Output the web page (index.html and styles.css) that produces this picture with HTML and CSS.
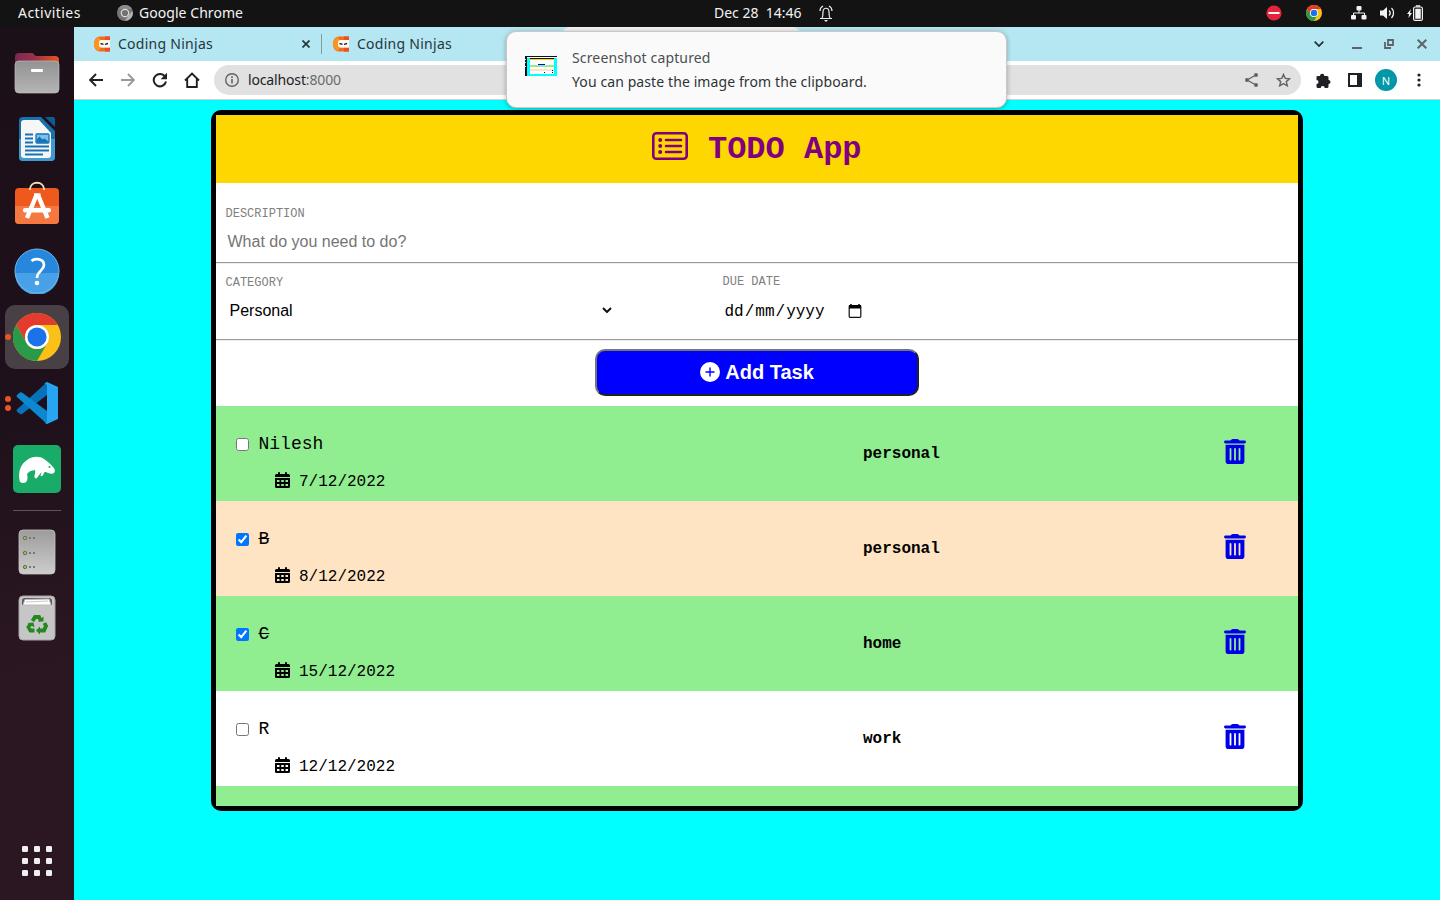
FILE: index.html
```html
<!DOCTYPE html>
<html lang="en">
<head>
<meta charset="utf-8">
<title>TODO App</title>
<link rel="stylesheet" href="styles.css">
</head>
<body>
<svg class="defs" width="0" height="0" aria-hidden="true">
  <symbol id="ninja" viewBox="0 0 16 16">
    <path d="M16 .5H6C2.500.500 0 3.500 0 8s2.500 7.500 6 7.500h10v-4H8a3 3 0 0 1-2-1v-6h10z" fill="#f36b1c"/>
    <path d="M5 1C1.500 2.500 0 5 0 8s1.500 5.500 5 7l2-4-2-3 2-3z" fill="#fb951f"/>
    <path d="M11 .500h5v4h-5zM11 11.500h5v4h-5z" fill="#f04f25"/>
    <rect x="5" y="4" width="11" height="7.500" rx="2.500" fill="#fffaf0"/><path d="M13 4h3v7.500h-3z" fill="#fffaf0"/>
    <path d="M6.500 7.500l3 .8M14 7.500l-3 .8" stroke="#222" stroke-width="1.300"/>
  </symbol>
  <symbol id="chrome" viewBox="0 0 48 48">
    <circle cx="24" cy="24" r="24" fill="#fbc116"/>
    <path d="M3.200 12A24 24 0 0 1 44.800 12H24a12 12 0 0 0-10.400 18z" fill="#e33b2e"/>
    <path d="M3.200 12A24 24 0 0 0 24 48l10.400-18a12 12 0 0 1-20.800 0z" fill="#2a9a48"/>
    <circle cx="24" cy="24" r="12" fill="#fff"/><circle cx="24" cy="24" r="9.600" fill="#1a73e8"/>
  </symbol>
  <symbol id="calendar" viewBox="0 0 15 16">
    <path d="M3 1a1 1 0 0 1 2 0v1h5V1a1 1 0 0 1 2 0v1h1.500A1.500 1.500 0 0 1 15 3.500V5H0V3.500A1.500 1.500 0 0 1 1.500 2H3z"/>
    <path fill-rule="evenodd" d="M0 6h15v8.500a1.500 1.500 0 0 1-1.500 1.500h-12A1.500 1.500 0 0 1 0 14.500zM2 8v2h2.500V8zm4.200 0v2h2.600V8zM10.500 8v2H13V8zM2 12v2h2.500v-2zm4.200 0v2h2.600v-2zm4.300 0v2H13v-2z"/>
  </symbol>
  <symbol id="trash" viewBox="0 0 22 25">
    <path d="M6.500 1.600L7.500.500Q8 0 8.700 0h4.600q.7 0 1.200.5l1 1.100h5a1.450 1.450 0 0 1 0 2.900h-19a1.450 1.450 0 0 1 0-2.900z"/>
    <path fill-rule="evenodd" d="M1.600 5.800h18.800v16.400a2.800 2.800 0 0 1-2.800 2.800H4.400a2.800 2.800 0 0 1-2.800-2.800zM5.600 9.500v11.600q.9 1 1.800 0V9.500q-.9-1-1.800 0zM10.100 9.500v11.600q.9 1 1.800 0V9.500q-.9-1-1.800 0zM14.600 9.500v11.600q.9 1 1.800 0V9.500q-.9-1-1.800 0z"/>
  </symbol>
</svg>

<div class="desktop">
  <header class="topbar">
    <div class="top-left">
      <span class="activities">Activities</span>
      <svg class="gray-chrome" width="16" height="16" viewBox="0 0 16 16"><circle cx="8" cy="8" r="8" fill="#777"/><path d="M1 4a8 8 0 0 1 14 0H8z" fill="#8a8a8a"/><path d="M8 16l4-6 3.500-4A8 8 0 0 1 8 16z" fill="#b5b5b5"/><circle cx="8" cy="8" r="4.300" fill="#ddd"/><circle cx="8" cy="8" r="3.100" fill="#727272"/></svg>
      <span class="app-name">Google Chrome</span>
    </div>
    <div class="top-clock">
      <span class="clock">Dec 28&nbsp; 14:46</span>
      <svg width="14" height="17" viewBox="0 0 14 17" fill="none" stroke="#f0f0f0" stroke-width="1.200"><path d="M1 13.500h12M3 13c1-1.500 1-3.500 1-6 0-5 6-5 6 0 0 2.500 0 4.500 1 6M4 1C2 2 1 3.500 1 6M10 1c2 1 3 2.500 3 5"/><path d="M5 15h4l-2 2z" fill="#f0f0f0" stroke="none"/></svg>
    </div>
    <div class="tray">
      <svg class="t-dnd" width="16" height="16" viewBox="0 0 16 16"><circle cx="8" cy="8" r="7.600" fill="#e4243b"/><path d="M2.500 8h11" stroke="#fff" stroke-width="2"/></svg>
      <svg class="t-chrome" width="16" height="16"><use href="#chrome"/></svg>
      <svg class="t-net" width="16" height="14" viewBox="0 0 16 14" fill="#f2f2f2"><rect x="5.500" width="5" height="4.500" rx="1"/><rect y="9" width="5" height="4.500" rx="1"/><rect x="10.500" y="9" width="5" height="4.500" rx="1"/><path d="M8 4v3M2.500 9V7h11v2" fill="none" stroke="#f2f2f2"/></svg>
      <svg class="t-vol" width="15" height="14" viewBox="0 0 15 14"><path d="M0 4.500h3L7 1v12L3 9.500H0z" fill="#f2f2f2"/><path d="M9 4.500c1.400 1.400 1.400 3.600 0 5M11.500 2c2.700 2.700 2.700 7.300 0 10" fill="none" stroke="#f2f2f2" stroke-width="1.300"/></svg>
      <svg class="t-bat" width="16" height="16" viewBox="0 0 16 16"><path d="M4 4L0 9h2l-.5 4L5 8H3z" fill="#f2f2f2"/><rect x="6.600" y="2" width="8.800" height="13.400" rx="1.500" fill="none" stroke="#f2f2f2" stroke-width="1.200"/><path d="M9 .500h4v1H9zM8.500 4h5v9.500h-5z" fill="#f2f2f2" stroke="#f2f2f2" stroke-width=".5"/></svg>
    </div>
  </header>

  <div class="workspace">
    <nav class="dock">
      <div class="dock-item"><svg width="46" height="42" viewBox="0 0 46 42"><defs><linearGradient id="fg"><stop offset="0" stop-color="#7a2856"/><stop offset=".45" stop-color="#9d3148"/><stop offset="1" stop-color="#e95420"/></linearGradient><linearGradient id="gg" x2="0" y2="1"><stop offset="0" stop-color="#929292"/><stop offset="1" stop-color="#b5b5b5"/></linearGradient><linearGradient id="dg" x2="0" y2="1"><stop offset="0" stop-color="#9c9c9c"/><stop offset="1" stop-color="#cdcdcd"/></linearGradient></defs><path d="M1 5a4 4 0 0 1 4-4h13q1.500 0 2.500 2 .5 1 2 1H41a4 4 0 0 1 4 4v12H1z" fill="url(#fg)"/><rect x="1" y="9" width="44" height="32" rx="4" fill="url(#gg)" stroke="#bdbdbd" stroke-width=".7"/><rect x="17" y="17" width="12" height="3" rx="1" fill="#fff"/></svg></div>
      <div class="dock-item"><svg width="38" height="46" viewBox="0 0 38 46"><path d="M5 1h18l14 14v26a4 4 0 0 1-4 4H5a4 4 0 0 1-4-4V5a4 4 0 0 1 4-4z" fill="#1a6fae"/><path d="M1 23h36v18a4 4 0 0 1-4 4H5a4 4 0 0 1-4-4z" fill="#3f9ad0"/><path d="M27 1h8a2 2 0 0 1 2 2v8z" fill="#0c5d96"/><path d="M6 4h15l12 13v22a3 3 0 0 1-3 3H6a3 3 0 0 1-3-3V7a3 3 0 0 1 3-3z" fill="#f6f6f6"/><path d="M7 18.500h8M7 22.500h8M7 26.500h8M7 30.500h24M7 34.500h24M7 38.500h18" stroke="#1673b4" stroke-width="2"/><rect x="18" y="18" width="13" height="9" rx="1" fill="#7cc0ee" stroke="#1673b4" stroke-width="1.300"/><path d="M18.500 26.500v-3l3-3 3 3 2-1 4 3v1z" fill="#1673b4"/></svg></div>
      <div class="dock-item"><svg class="store" width="46" height="44" viewBox="0 0 46 44"><path d="M16 8.500c0-9 14-9 14 0" fill="none" stroke="#f5dcae" stroke-width="2"/><rect x="1" y="7" width="44" height="36" rx="4" fill="#ee5a1e"/><path d="M1 25h44v14a4 4 0 0 1-4 4H5a4 4 0 0 1-4-4z" fill="#f4783f"/><path d="M16 9V7m14 2V7" stroke="#f5dcae" stroke-width="2"/><path d="M22.500 14L13 37M24 14l9.500 23" stroke="#fff" stroke-width="4.500"/><path d="M20 13.500h6.500" stroke="#fff" stroke-width="2.500"/><rect x="9" y="27" width="28" height="4.500" rx="2" fill="#fff"/></svg></div>
      <div class="dock-item"><svg width="46" height="46" viewBox="0 0 46 46"><circle cx="23" cy="23" r="22" fill="#2687dc"/><path d="M1 25a22 22 0 0 0 44 0z" fill="#48a0e6"/><circle cx="23" cy="23" r="22" fill="none" stroke="#6bb8ec"/><path d="M17.500 13c3-3 12.500-2.800 12.500 4 0 5.500-7 6-7 13" fill="none" stroke="#fff" stroke-width="2.700"/><circle cx="23" cy="35" r="2.300" fill="#fff"/></svg></div>
      <div class="dock-item active"><i class="dots"><b></b></i><svg width="48" height="48"><use href="#chrome"/></svg></div>
      <div class="dock-item"><i class="dots"><b></b><b></b></i><svg width="44" height="44" viewBox="0 0 44 44"><path d="M32 1v13L7 33q-1 .6-2 0l-3-2.500q-1-1 0-2z" fill="#0872b8"/><path d="M2 14l3-2.500q1-.6 2 0L32 30v13L2 16q-1-1 0-2z" fill="#0d87d0"/><path d="M32 1l11 5v32l-11 5-3-1.500q3 1 3-2V5q0-3-3-2.500z" fill="#27a5f0"/></svg></div>
      <div class="dock-item"><svg width="48" height="48" viewBox="0 0 48 48"><rect width="48" height="48" rx="5" fill="#19ac68"/><path d="M6.500 35C5 26 8 19 14 15c5-3.500 12-4.500 17-1 4 2.500 6 5 9 8 2 2 2.500 4 1 6-2 1.500-4 .5-6 0-2.500-1-3.500-1.500-4 0-.5 2.500-2 3.500-3.500 3l1-4-5 6.500c-1.500 0-2.500-1-2-3 .5-1.500 1-4 .5-5.500-3 .5-6 1-8 4 1 4 1 9-4 9-2 0-3.500-1-3.500-3z" fill="#fff"/><circle cx="36.500" cy="22" r="1" fill="#19ac68"/></svg></div>
      <div class="dock-sep"></div>
      <div class="dock-item"><svg width="38" height="46" viewBox="0 0 38 46"><rect x="1" y="1" width="36" height="44" rx="4" fill="url(#dg)" stroke="#c4c4c4" stroke-width=".8"/><g fill="#a0b95f" stroke="#697050"><circle cx="7" cy="9" r="1.700"/><circle cx="7" cy="24" r="1.700"/><circle cx="7" cy="38" r="1.700"/></g><path d="M11 9h2m2 0h2M11 24h2m2 0h2M11 38h2m2 0h2" stroke="#777" stroke-width="2"/></svg></div>
      <div class="dock-item"><svg width="38" height="46" viewBox="0 0 38 46"><rect x="1" y="1" width="36" height="44" rx="4" fill="#c6c6c6" stroke="#a6a6a6"/><path d="M4 10V5.500Q4 3 7 3h24q3 0 3 2.500V10z" fill="#5d5d5d"/><path d="M5 10l2-5.500L31 4l2 6z" fill="#fff" stroke="#bbb"/><path d="M8 7l22-1" stroke="#ccc"/><g fill="none" stroke="#24871f" stroke-width="3.800"><path d="M14.500 26l2.500-4h4l2 4M26.500 28l1.500 3-2 4.500h-4M16.500 35.500h-4L10.500 32l2-3"/></g><path d="M20 26.500l5.500 0 0-5zM22 31.500v8l-4-4zM9.500 28l6-.5 1 5z" fill="#24871f"/></svg></div>
      <div class="launcher"><svg width="30" height="30" viewBox="0 0 30 30" fill="#f0f0f0"><g id="gr"><rect width="6" height="6" rx="1.300"/><rect x="12" width="6" height="6" rx="1.300"/><rect x="24" width="6" height="6" rx="1.300"/></g><use href="#gr" y="12"/><use href="#gr" y="24"/></svg></div>
    </nav>

    <main class="browser">
      <div class="tabstrip">
        <div class="tab first"><svg width="16" height="16"><use href="#ninja"/></svg><span>Coding Ninjas</span><svg class="tab-x" width="8" height="8" viewBox="0 0 8 8"><path d="M.5.500l7 7M7.500.500l-7 7" stroke="#25343a" stroke-width="1.700"/></svg></div>
        <div class="tab"><svg width="16" height="16"><use href="#ninja"/></svg><span>Coding Ninjas</span></div>
        <div class="tab-current"></div>
        <div class="win-buttons">
          <svg width="10" height="6" viewBox="0 0 10 6"><path d="M.7.700L5 5 9.300.700" fill="none" stroke="#222c30" stroke-width="1.700"/></svg>
          <svg class="w-min" width="10" height="10"><path d="M0 9h10" stroke="#5c6468" stroke-width="2"/></svg>
          <svg class="w-max" width="10" height="10" viewBox="0 0 10 10"><path d="M4 1h5v5H4zM1 3v6h6" fill="none" stroke="#5c6468" stroke-width="1.800"/></svg>
          <svg class="w-close" width="10" height="10" viewBox="0 0 10 10"><path d="M.7.700l8.600 8.600M9.300.700L.7 9.300" stroke="#5c6468" stroke-width="2"/></svg>
        </div>
      </div>
      <div class="toolbar">
        <svg width="14" height="14" viewBox="0 0 14 14"><path d="M14 7H1.500M7 1L1.200 7 7 13" fill="none" stroke="#202124" stroke-width="1.900"/></svg>
        <svg class="forward" width="14" height="14" viewBox="0 0 14 14"><path d="M0 7h12.500M7 1l5.800 6L7 13" fill="none" stroke="#9a9a9c" stroke-width="1.900"/></svg>
        <svg class="reload" width="16" height="16" viewBox="0 0 16 16"><path d="M13.300 5A6.200 6.200 0 1 0 14 9.500" fill="none" stroke="#202124" stroke-width="2"/><path d="M15 .8v6.400H8.600z" fill="#202124"/></svg>
        <svg width="16" height="16" viewBox="0 0 16 16"><path d="M1 8.500L8 1.500l7 7M3.200 7v8h9.600V7" fill="none" stroke="#202124" stroke-width="1.900"/></svg>
        <div class="omnibox">
          <svg width="14" height="14" viewBox="0 0 14 14"><circle cx="7" cy="7" r="6.300" fill="none" stroke="#5f6368" stroke-width="1.400"/><path d="M7 6v4.500M7 3.300v1.600" stroke="#5f6368" stroke-width="1.600"/></svg>
          <span class="url">localhost<span class="port">:8000</span></span>
          <svg class="share" width="13" height="14" viewBox="0 0 13 14"><path d="M11 2L2 7l9 5" fill="none" stroke="#5f6368" stroke-width="1.300"/><g fill="#5f6368"><circle cx="11" cy="2" r="2"/><circle cx="2" cy="7" r="2"/><circle cx="11" cy="12" r="2"/></g></svg>
          <svg class="star" width="15" height="14" viewBox="0 0 15 14"><path d="M7.500 1.500l1.700 3.900 4.300.4-3.200 2.800 1 4.200-3.800-2.200-3.800 2.200 1-4.200-3.200-2.800 4.300-.4z" fill="none" stroke="#5f6368" stroke-width="1.400"/></svg>
        </div>
        <svg class="puzzle" width="15" height="15" viewBox="0 0 15 15"><path d="M1.500 3H4a2.200 2.200 0 0 1 4.400 0H11q1.500 0 1.500 1.500V7a2 2 0 0 1 0 4v2.500q0 1.500-1.500 1.500H8.700a2 2 0 0 0-4 0H2Q.5 15 .5 13.500V11a2 2 0 0 0 0-4V4.500Q0 3 1.500 3z" fill="#202124"/></svg>
        <svg class="side" width="14" height="14" viewBox="0 0 14 14"><path d="M1 1h12v12H1z" fill="#fff" stroke="#202124" stroke-width="2"/><path d="M9 1h4v12H9z" fill="#202124"/></svg>
        <span class="avatar">N</span>
        <svg class="kebab" width="4" height="14" viewBox="0 0 4 14" fill="#202124"><circle cx="2" cy="2" r="1.600"/><circle cx="2" cy="7" r="1.600"/><circle cx="2" cy="12" r="1.600"/></svg>
      </div>

      <div class="page">
        <section class="todo">
          <h1 class="title"><svg width="36" height="28" viewBox="0 0 36 28"><rect x="1.300" y="1.300" width="33.400" height="25.400" rx="3" fill="none" stroke="purple" stroke-width="2.600"/><path d="M14 8h15M14 14h15M14 20h15" stroke="purple" stroke-width="2.600" stroke-linecap="round"/><g fill="purple"><circle cx="8.200" cy="8" r="2"/><circle cx="8.200" cy="14" r="2"/><circle cx="8.200" cy="20" r="2"/></g></svg><span>TODO App</span></h1>
          <form class="form">
            <div class="field desc"><label>DESCRIPTION</label><div class="placeholder">What do you need to do?</div></div>
            <hr>
            <div class="split">
              <div class="field cat"><label>CATEGORY</label><div class="select"><span>Personal</span><svg width="10" height="6" viewBox="0 0 10 6"><path d="M1 1l4 4 4-4" fill="none" stroke="#111" stroke-width="2"/></svg></div></div>
              <div class="field due"><label>DUE DATE</label><div class="date"><span>dd</span>/<span>mm</span>/<span>yyyy</span><svg width="14" height="14" viewBox="0 0 14 14"><path d="M3 0v2M11 0v2" stroke="#000" stroke-width="1.500"/><rect x="1.200" y="1.700" width="11.600" height="11.600" rx=".8" fill="none" stroke="#111" stroke-width="1.200"/><path d="M1 1.200h12v3.300H1z"/></svg></div></div>
            </div>
            <hr>
            <button type="button" class="add"><svg width="20" height="20" viewBox="0 0 20 20"><circle cx="10" cy="10" r="10" fill="#fff"/><path d="M10 6v8M6 10h8" stroke="#00f" stroke-width="1.400" stroke-linecap="round"/></svg><span>Add Task</span></button>
          </form>
          <div class="tasks">
            <div class="task green"><div class="info"><div class="name"><input type="checkbox"><span>Nilesh</span></div><div class="when"><svg width="15" height="16"><use href="#calendar"/></svg><span>7/12/2022</span></div></div><div class="kind">personal</div><svg class="bin" width="22" height="25"><use href="#trash"/></svg></div>
            <div class="task bisque"><div class="info"><div class="name done"><input type="checkbox" checked><span>B</span></div><div class="when"><svg width="15" height="16"><use href="#calendar"/></svg><span>8/12/2022</span></div></div><div class="kind">personal</div><svg class="bin" width="22" height="25"><use href="#trash"/></svg></div>
            <div class="task green"><div class="info"><div class="name done"><input type="checkbox" checked><span>C</span></div><div class="when"><svg width="15" height="16"><use href="#calendar"/></svg><span>15/12/2022</span></div></div><div class="kind">home</div><svg class="bin" width="22" height="25"><use href="#trash"/></svg></div>
            <div class="task"><div class="info"><div class="name"><input type="checkbox"><span>R</span></div><div class="when"><svg width="15" height="16"><use href="#calendar"/></svg><span>12/12/2022</span></div></div><div class="kind">work</div><svg class="bin" width="22" height="25"><use href="#trash"/></svg></div>
            <div class="task green"></div>
          </div>
        </section>
      </div>
    </main>
  </div>

  <aside class="notification">
    <svg width="32" height="20" viewBox="0 0 32 20" shape-rendering="crispEdges"><path d="M0 0h32v20H0z" fill="#0ff"/><path d="M0 0h32v1H0zM0 0h1.700v20H0z" fill="#111"/><path d="M2 1h30v1H2z" fill="#fff"/><path d="M5 2h24v16H5z" fill="#fff"/><path d="M5 2h24v1H5z" fill="#111"/><path d="M5 3h24v1H5z" fill="gold"/><path d="M5 9h24v2H5z" fill="#90ee90"/><path d="M5 13h24v2H5z" fill="bisque"/><path d="M13 8h7v1h-7z" fill="#00f"/><path d="M19 16h1v1h-1zM27 14h1v1h-1zM27 16h1v1h-1z" fill="#006"/><path d="M0 3h1v1H0zM0 6h1v1H0zM0 10h1v1H0z" fill="#ddd"/></svg>
    <div class="note-text"><div class="note-title">Screenshot captured</div><div class="note-body">You can paste the image from the clipboard.</div></div>
  </aside>
</div>
</body>
</html>
```
FILE: styles.css
```css
* { box-sizing: border-box; }
body { margin: 0; overflow: hidden; font-family: "Noto Sans", "Open Sans", sans-serif; }
svg { display: block; flex: none; }
.defs { position: absolute; }
.desktop { width: 1440px; height: 900px; display: flex; flex-direction: column; }

.topbar { height: 27px; padding-bottom: 1px; background: #131313; color: #f2f2f2; display: grid; grid-template-columns: 714px 1fr auto; align-items: center; font-size: 14px; line-height: 26px; }
.top-left { display: flex; align-items: center; padding-left: 18px; }
.activities { width: 99px; letter-spacing: .45px; }
.app-name { margin-left: 6px; letter-spacing: .05px; }
.top-clock { display: flex; align-items: center; white-space: nowrap; }
.clock { width: 105px; letter-spacing: 0; }
.tray { display: flex; align-items: center; padding-right: 17px; }
.t-chrome { margin-left: 24px; }
.t-net { margin-left: 29px; }
.t-vol { margin-left: 13px; }
.t-bat { margin-left: 12px; }

.workspace { flex: 1; display: flex; min-height: 0; }
.dock { width: 74px; padding-top: 13px; background: linear-gradient(170deg, #1b0f18, #1f111b 45%, #2b1722 75%, #2a1722); display: flex; flex-direction: column; align-items: center; }
.dock-item { position: relative; width: 64px; height: 64px; margin: 1px 0; border-radius: 10px; display: flex; align-items: center; justify-content: center; }
.store { margin-top: -5px; }
.active { background: #494046; }
.dots { position: absolute; left: 0; top: 0; height: 64px; display: flex; flex-direction: column; justify-content: center; gap: 3px; }
.dots b { width: 6px; height: 6px; border-radius: 50%; background: #e95420; }
.dock-sep { width: 48px; height: 1px; margin: 8px 0; background: #5e545b; }
.launcher { margin-top: auto; padding-bottom: 24px; }

.browser { flex: 1; display: flex; flex-direction: column; min-width: 0; }
.tabstrip { height: 34px; background: #b5e7f2; display: flex; align-items: center; color: #26363c; font-size: 14px; }
.tab { display: flex; align-items: center; gap: 8px; height: 20px; padding-left: 11px; white-space: nowrap; letter-spacing: .27px; width: 240px; }
.tab span { line-height: 20px; }
.first { width: 248px; padding-left: 20px; border-right: 1px solid #7f9da5; padding-right: 11px; }
.tab-x { margin-left: auto; }
.tab-current { width: 238px; height: 34px; background: #f1f1f1; border-radius: 8px 8px 0 0; }
.win-buttons { margin-left: auto; display: flex; align-items: center; padding-right: 13px; }
.w-min { margin-left: 28px; }
.w-max { margin-left: 22px; }
.w-close { margin-left: 23px; }
.toolbar { height: 39px; background: #fff; border-bottom: 1px solid #d0d0d0; display: flex; align-items: center; padding: 0 19px 0 15px; gap: 17px; }
.forward, .reload { transform: translateX(1px); }
.omnibox { flex: 1; height: 30px; margin-left: -3px; border-radius: 15px; background: #e1e1e1; display: flex; align-items: center; padding: 0 10px 0 11px; }
.url { margin-left: 9px; font-size: 14px; line-height: 20px; padding-bottom: 1px; color: #202124; letter-spacing: -.15px; }
.port { color: #696c70; }
.share { margin-left: auto; }
.star { margin-left: 18px; }
.puzzle { margin-left: -2px; }
.side { margin-right: -1px; }
.avatar { width: 22px; height: 22px; border-radius: 50%; margin: 0 0 0 -3px; background: #0097a7; color: #fff; font-size: 11px; display: grid; place-items: center; }
.kebab { margin-left: 3px; }
.puzzle, .side { position: relative; }

.page { flex: 1; background: #0ff; padding: 10px 137px 0; min-height: 0; }
.todo { height: 701px; border: 5px solid #000; border-radius: 10px; background: #fff; display: flex; flex-direction: column; font-family: "Liberation Mono", monospace; }
.title { flex: none; margin: 0; height: 68px; background: gold; color: purple; font-size: 32px; line-height: 36px; display: flex; justify-content: center; align-items: center; gap: 19.500px; }
.title svg { margin-bottom: 6px; }
.title span { padding-top: 2px; }
.form { flex: none; height: 223px; display: flex; flex-direction: column; }
.form hr { width: 100%; margin: 0; border: 0; height: 2px; background: linear-gradient(#9a9a9a 50%, #eee 50%); }
.field label { display: block; font-size: 12px; line-height: 14px; color: gray; }
.desc { height: 79px; padding: 24px 9.500px 0; }
.placeholder { margin-top: 11px; padding-left: 2px; font: 16px/20px "Liberation Sans", sans-serif; color: #757575; }
.split { height: 75px; display: grid; grid-template-columns: 497px 1fr; padding-left: 9.500px; }
.cat { padding-top: 12px; }
.due { padding-top: 11px; }
.select { margin-top: 11px; width: 386px; padding-left: 4px; display: flex; align-items: center; justify-content: space-between; font: 16px/20px "Liberation Sans", sans-serif; }
.select svg { margin-bottom: 2px; }
.date { margin-top: 13px; padding-left: 1px; display: flex; align-items: center; font-size: 16px; line-height: 20px; }
.date span { padding: 0 1px; }
.date svg { margin: 0 0 2px 22px; }
.add { width: 324px; height: 47px; margin: 8px auto 0; padding: 0 0 2px; background: #00f; color: #fff; border: 2px solid; border-color: #767676 #212121 #212121 #767676; border-radius: 10px; font: bold 20px/24px "Liberation Sans", sans-serif; display: flex; align-items: center; justify-content: center; gap: 5px; }
.task { height: 95px; display: grid; grid-template-columns: 627px 1fr auto; padding: 0 52px 0 20px; }
.task:last-child { height: 20px; }
.green { background: #90ee90; }
.bisque { background: #ffe4c4; }
.info { padding-top: 27px; }
.name { display: flex; align-items: center; height: 21px; font-size: 18px; }
.name input { width: 13px; height: 13px; margin: 1px 9.500px 0 0; }
.name span { line-height: 20px; }
.done span { text-decoration: line-through; }
.when { display: flex; align-items: center; gap: 9px; margin-top: 17px; padding-left: 39px; font-size: 16px; line-height: 20px; }
.when svg { margin-bottom: 2px; }
.when span { margin: 1px 0 -1px; }
.kind { font-size: 16px; font-weight: bold; line-height: 20px; padding-top: 38px; }
.bin { margin-top: 33px; fill: #0000e8; }

.notification { position: absolute; left: 506px; top: 31px; width: 501px; height: 77px; border: 1px solid #cbc8c6; border-radius: 10px; background: #fafafa; box-shadow: 0 1px 5px rgba(0,0,0,.3); display: flex; align-items: flex-start; padding: 15px 18px; gap: 15px; color: #2e3436; font-size: 14px; line-height: 24px; white-space: nowrap; }
.notification > svg { margin-top: 9px; }
.note-text { margin-top: -1px; }
.note-title { color: #4b4f51; letter-spacing: .15px; }
.note-body { letter-spacing: .1px; }
```
